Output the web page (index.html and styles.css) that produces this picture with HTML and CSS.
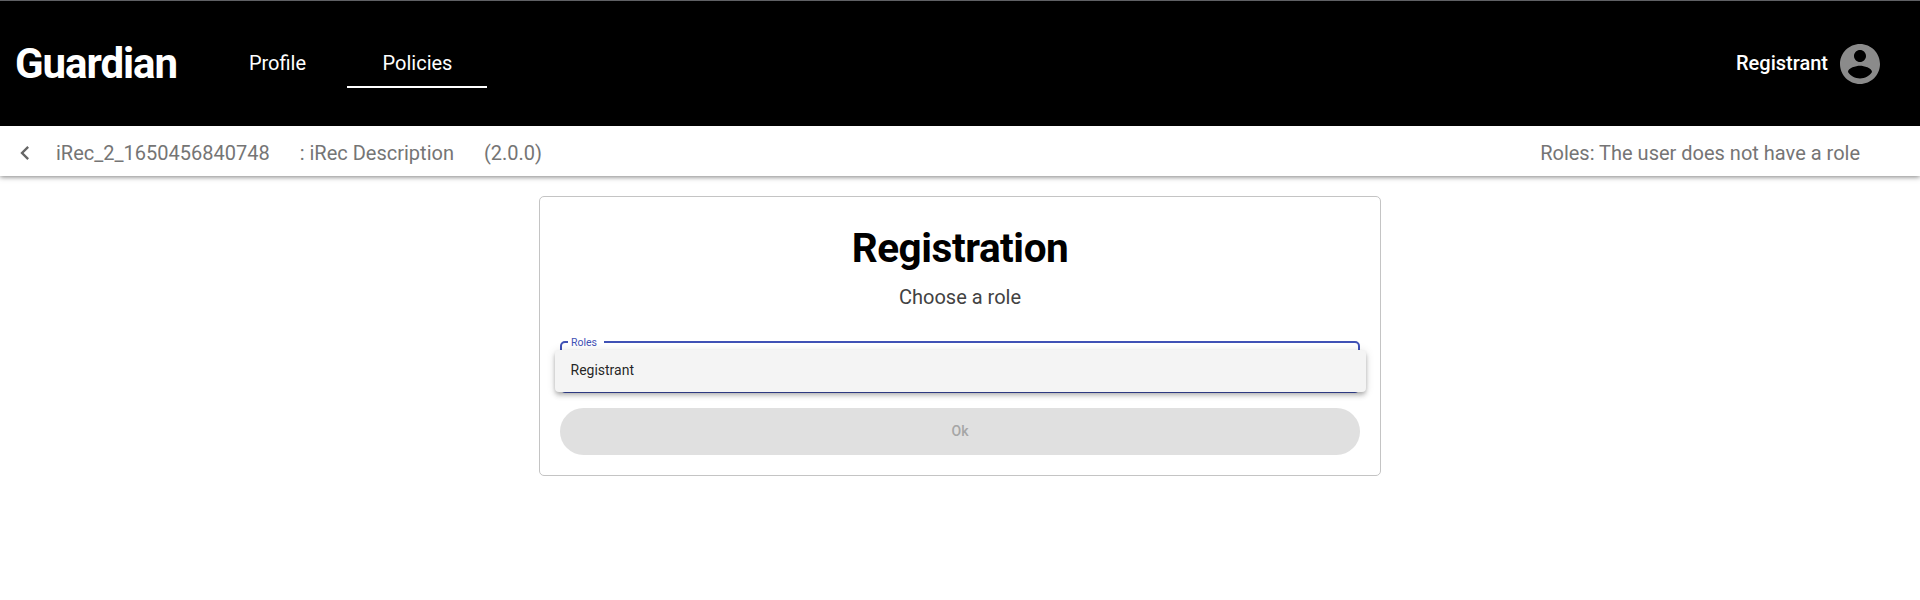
FILE: index.html
```html
<!DOCTYPE html>
<html lang="en">
<head>
<meta charset="utf-8">
<title>Guardian</title>
<link rel="stylesheet" href="styles.css">
</head>
<body>
<header class="header">
  <div class="logo">Guardian</div>
  <nav class="nav">
    <a class="nav-link">Profile</a>
    <a class="nav-link active">Policies</a>
  </nav>
  <div class="account">
    <span class="account-name">Registrant</span>
    <svg class="avatar" viewBox="2 2 20 20"><path d="M12 2C6.48 2 2 6.48 2 12s4.480 10 10 10 10-4.480 10-10S17.520 2 12 2zm0 3c1.660 0 3 1.340 3 3s-1.340 3-3 3-3-1.340-3-3 1.340-3 3-3zm0 14.200c-2.500 0-4.710-1.280-6-3.220.030-1.990 4-3.080 6-3.080 1.990 0 5.970 1.090 6 3.080-1.290 1.940-3.500 3.220-6 3.220z"/></svg>
  </div>
</header>
<div class="toolbar">
  <svg class="back" viewBox="0 0 24 24"><path d="M15.410 7.410L14 6l-6 6 6 6 1.410-1.410L10.830 12z"/></svg>
  <span class="policy-name">iRec_2_1650456840748</span>
  <span class="policy-desc">: iRec Description</span>
  <span class="policy-version">(2.0.0)</span>
  <span class="roles">Roles: The user does not have a role</span>
</div>
<main class="card">
  <h1 class="title">Registration</h1>
  <p class="subtitle">Choose a role</p>
  <div class="field">
    <span class="field-label">Roles</span>
    <div class="menu"><div class="option">Registrant</div></div>
  </div>
  <button class="submit" disabled>Ok</button>
</main>
</body>
</html>
```
FILE: styles.css
```css
* { box-sizing: border-box; }
body {
  margin: 0;
  background: #fff;
  font-family: Roboto, "Liberation Sans", sans-serif;
}
.header {
  display: flex;
  align-items: center;
  height: 126px;
  padding: 0 40px 0 15px;
  border-top: 1px solid #5f6064;
  background: #000;
  color: #fff;
}
.logo {
  width: 193px;
  font-size: 42px;
  font-weight: 700;
  line-height: 50px;
  letter-spacing: -1.05px;
}
.nav { display: flex; }
.nav-link {
  display: flex;
  justify-content: center;
  width: 139px;
  height: 49px;
  border-bottom: 2px solid transparent;
  font-size: 20px;
  line-height: 49px;
}
.nav-link.active { width: 140px; padding-left: 1px; border-bottom-color: #fff; }
.account {
  display: flex;
  align-items: center;
  gap: 12px;
  margin-left: auto;
  font-size: 20px;
  font-weight: 500;
}
.account-name { margin-top: -2px; }
.avatar { width: 40px; height: 40px; fill: #8b8b8b; }
.toolbar {
  display: flex;
  align-items: center;
  height: 50px;
  padding: 3px 60px 0 11px;
  color: #757575;
  font-size: 20px;
  box-shadow: 0 1px 5px rgba(0, 0, 0, .5);
}
.back { width: 28px; height: 28px; margin-right: 17px; fill: #666; }
.policy-desc, .policy-version { margin-left: 30px; }
.roles { margin-left: auto; }
.card {
  width: 842px;
  height: 280px;
  margin: 20px auto 0;
  padding: 26px 20px 20px;
  border: 1px solid #c4c4c4;
  border-radius: 5px;
}
.title {
  margin: 0;
  font-size: 40.5px;
  font-weight: 700;
  line-height: 50px;
  letter-spacing: -.45px;
  text-align: center;
}
.subtitle {
  margin: 12px 0 0;
  color: #424242;
  font-size: 20px;
  line-height: 24px;
  text-align: center;
}
.field {
  position: relative;
  height: 52px;
  margin-top: 32px;
  border: 2px solid #3f51b5;
  border-radius: 5px;
}
.field-label {
  position: absolute;
  top: -6px;
  left: 6px;
  width: 36px;
  padding-left: 3px;
  background: #fff;
  color: #3f51b5;
  font-size: 10.5px;
  line-height: 12px;
}
.menu {
  position: absolute;
  top: 7px;
  left: -7px;
  width: 811px;
  border-radius: 4px;
  background: #f4f4f4;
  box-shadow: 0 2px 4px -1px rgba(0, 0, 0, .2), 0 4px 5px rgba(0, 0, 0, .14), 0 1px 10px rgba(0, 0, 0, .12);
}
.option {
  height: 42px;
  padding-left: 15.5px;
  color: rgba(0, 0, 0, .87);
  font-size: 14px;
  line-height: 40px;
}
.submit {
  display: block;
  width: 100%;
  height: 47px;
  margin-top: 15px;
  padding: 0 0 1px;
  border: 0;
  border-radius: 24px;
  background: #e0e0e0;
  color: #a6a6a6;
  font: 500 14px Roboto, sans-serif;
}
```
